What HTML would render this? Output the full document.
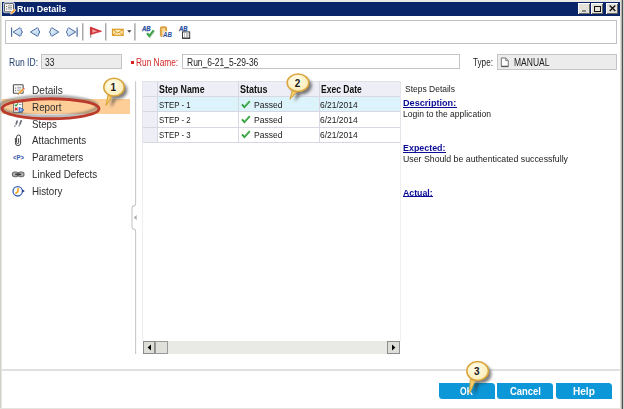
<!DOCTYPE html>
<html><head><meta charset="utf-8"><title>Run Details</title>
<style>
html,body{margin:0;padding:0;}
body{width:624px;height:409px;position:relative;overflow:hidden;background:#fff;font-family:"Liberation Sans",sans-serif;font-size:10px;color:#222;}
.a{position:absolute;}
.t{position:absolute;white-space:nowrap;line-height:14px;height:14px;transform-origin:0 50%;filter:blur(.35px);}
</style></head><body>
<div class="a" style="left:0px;top:0px;width:1px;height:409px;background:#d3d2c9;"></div>
<div class="a" style="left:1px;top:0px;width:1px;height:409px;background:#e6e5df;"></div>
<div class="a" style="left:0px;top:0px;width:622px;height:2px;background:#ebe9e3;"></div>
<div class="a" style="left:619.6px;top:0px;width:1.4px;height:409px;background:#dddcd5;"></div>
<div class="a" style="left:621px;top:0px;width:1px;height:409px;background:#b5b5ae;"></div>
<div class="a" style="left:622px;top:0px;width:1px;height:409px;background:#515151;"></div>
<div class="a" style="left:623px;top:0px;width:1px;height:409px;background:#d0d2d2;"></div>
<div class="a" style="left:0px;top:408px;width:621px;height:1px;background:#e6e4de;"></div>
<div class="a" style="left:1.6px;top:1.7px;width:618px;height:14px;background:#0a246a;"></div>
<div class="t" style="left:17.40px;top:1.81px;font-size:9.5px;color:#fff;font-weight:bold;transform:scaleX(0.9416);">Run Details</div>
<svg class="a" style="left:2px;top:1px" width="16" height="16" viewBox="2 1 16 16"><rect x="3.600" y="2.700" width="10.800" height="10" rx="1.200" fill="#f4f4f4" stroke="#c4d4ee" stroke-width="1"/><rect x="4.500" y="3.600" width="9" height="8.200" rx=".6" fill="#f6f6f6" stroke="#5c5c5c" stroke-width="1"/><path d="M6 6.500h1.200M6 9h1.200" stroke="#666" stroke-width="1"/><path d="M8 5.800h4M8 7.400h4M8 9h4" stroke="#8e8e8e" stroke-width=".9"/><path d="M10.400 14.200l.5-2 3.600-3.500 1.500 1.500-3.600 3.500z" fill="#f2a63a" stroke="#fff" stroke-width=".5"/></svg>
<div class="a" style="left:578.2px;top:3.3px;width:11.7px;height:10.5px;background:#e4e2d8;box-shadow:inset 1px 1px #fff,inset -1px -1px #6a6a64"></div>
<div class="a" style="left:590.8px;top:3.3px;width:12.5px;height:10.5px;background:#e4e2d8;box-shadow:inset 1px 1px #fff,inset -1px -1px #6a6a64"></div>
<div class="a" style="left:605.5px;top:3.3px;width:12.5px;height:10.5px;background:#e4e2d8;box-shadow:inset 1px 1px #fff,inset -1px -1px #6a6a64"></div>
<div class="a" style="left:581.7px;top:10.4px;width:4.7px;height:1.4px;background:#8a8a86;"></div>
<div class="a" style="left:593.500px;top:5.500px;width:5.300px;height:4px;border:1px solid #111;border-top-width:1.800px"></div>
<svg class="a" style="left:605.500px;top:3.300px" width="13" height="11"><path d="M3.700 2.600l5.600 5.300M9.300 2.600l-5.600 5.300" stroke="#111" stroke-width="1.400"/></svg>
<div class="a" style="left:5px;top:20px;width:609.500px;height:22.300px;border:1px solid #c2c2c2;background:#fff"></div>
<svg class="a" style="left:0;top:18px" width="220" height="28" viewBox="0 18 220 28">
<defs><linearGradient id="ab" x1="0" y1="0" x2="1" y2="1"><stop offset="0" stop-color="#f4f9ff"/><stop offset="1" stop-color="#a9cbe6"/></linearGradient></defs>
<g fill="url(#ab)" stroke="#4a6aa4" stroke-width="1" stroke-linejoin="round">
 <path d="M11.600 27.400v9.400" fill="none" stroke-width="1.200"/>
 <path d="M13.100 32l7-4.300 1 1v1q2.600 2.300 0 4.600v1l-1 1z"/>
 <path d="M30.500 32l7-4.300 1 1v1q2.600 2.300 0 4.600v1l-1 1z"/>
 <path d="M58.800 32l-7-4.300-1 1v1q-2.600 2.300 0 4.600v1l1 1z"/>
 <path d="M75.700 32l-7-4.300-1 1v1q-2.600 2.300 0 4.600v1l1 1z"/>
 <path d="M77.100 27.400v9.400" fill="none" stroke-width="1.200"/>
</g>
<path d="M82.750 23.200v17.300M105.750 23.200v17.300M134.900 23.200v17.300" stroke="#a4a4a4" stroke-width="1.400" fill="none"/>
<path d="M90.700 27v10.800" stroke="#8c8c8c" stroke-width="1.100"/><path d="M90.400 27.100l11.100 4.200-11.100 3.300z" fill="#d5353b" stroke="#c8262c" stroke-width=".7" stroke-linejoin="round"/><path d="M92.300 29.200l5.200 2-5.200 1.600z" fill="#f0a0a0"/>
<rect x="112.500" y="29.300" width="10.600" height="6" fill="#fdefc0" stroke="#dc981e" stroke-width="1.200"/><path d="M112.500 29.300l5.300 3.700 5.300-3.700M112.500 35.300l3.800-3M123.100 35.300l-3.800-3" stroke="#dc981e" stroke-width="1" fill="none"/>
<path d="M127.200 30.300h4.200l-2.100 2.500z" fill="#3a3a3a"/>
<g font-family="Liberation Sans, sans-serif" font-weight="bold" font-style="italic" font-size="6.400" fill="#2c50a0" stroke="#2c50a0" stroke-width=".25">
<text x="142" y="31" textLength="8.600" lengthAdjust="spacingAndGlyphs">AB</text>
<text x="179" y="31" textLength="8.400" lengthAdjust="spacingAndGlyphs">AB</text>
</g>
<path d="M147 33.200l2.300 2.700 4.300-5.700" stroke="#b8c8b8" stroke-width="2.600" fill="none" transform="translate(.4,.5)"/>
<path d="M147 33.200l2.300 2.700 4.300-5.700" stroke="#3aa444" stroke-width="1.900" fill="none"/>
<rect x="160.400" y="26.800" width="6.200" height="9.800" rx="1.200" fill="#e6b04c" stroke="#c88e2c" stroke-width=".8"/><rect x="162" y="28.400" width="3" height="6" fill="#f4d89c"/>
<text x="163" y="37.300" font-family="Liberation Sans, sans-serif" font-weight="bold" font-style="italic" font-size="6.600" fill="#2c50a0" stroke="#fff" stroke-width="1.400" paint-order="stroke" textLength="9" lengthAdjust="spacingAndGlyphs">AB</text>
<rect x="182.500" y="31.900" width="7.200" height="6.200" fill="#fff" stroke="#3c3c3c" stroke-width="1"/><path d="M182 38.300h8.200" stroke="#333" stroke-width="1"/><path d="M184 34h1M186 34h2.600M184 36h1M186 36h2.600" stroke="#777" stroke-width=".9"/>
</svg>
<div class="t" style="left:9.20px;top:56.03px;font-size:10px;color:#1f3f77;transform:scaleX(0.8555);">Run ID:</div>
<div class="a" style="left:41px;top:53.800px;width:79.300px;height:13.500px;border:1px solid #c4c4c4;background:#ececec"></div>
<div class="t" style="left:45.30px;top:55.83px;font-size:10px;color:#222;transform:scaleX(0.8468);">33</div>
<div class="a" style="left:130.5px;top:60.5px;width:3px;height:3px;background:#d62020;"></div>
<div class="t" style="left:135.80px;top:56.03px;font-size:10px;color:#d32626;transform:scaleX(0.8340);">Run Name:</div>
<div class="a" style="left:182.400px;top:53.800px;width:275.400px;height:13.500px;border:1px solid #c4c4c4;background:#fff"></div>
<div class="t" style="left:186.70px;top:55.83px;font-size:10px;color:#222;transform:scaleX(0.8498);">Run_6-21_5-29-36</div>
<div class="t" style="left:473.00px;top:55.53px;font-size:10px;color:#222;transform:scaleX(0.8163);">Type:</div>
<div class="a" style="left:496.500px;top:54px;width:118px;height:14.300px;border:1px solid #c4c4c4;background:#ececec"></div>
<svg class="a" style="left:500px;top:57px" width="11" height="11"><path d="M1.300 9.300v-8.300h4.400l2.600 2.600v5.700z" fill="#fcfcfc" stroke="#777" stroke-width="1"/><path d="M5.700 1v2.600h2.600" fill="none" stroke="#777" stroke-width=".9"/><path d="M1.300 9.500h7" stroke="#555" stroke-width="1.200"/></svg>
<div class="t" style="left:513.70px;top:55.53px;font-size:10px;color:#222;transform:scaleX(0.8513);">MANUAL</div>
<div class="a" style="left:2px;top:98.8px;width:127.8px;height:15px;background:#fece98;"></div>
<div class="t" style="left:31.90px;top:83.39px;font-size:11px;color:#2e2e2e;transform:scaleX(0.9180);">Details</div>
<div class="t" style="left:31.90px;top:100.19px;font-size:11px;color:#2e2e2e;transform:scaleX(0.8970);">Report</div>
<div class="t" style="left:31.90px;top:116.79px;font-size:11px;color:#2e2e2e;transform:scaleX(0.8842);">Steps</div>
<div class="t" style="left:31.90px;top:133.39px;font-size:11px;color:#2e2e2e;transform:scaleX(0.8862);">Attachments</div>
<div class="t" style="left:31.90px;top:150.09px;font-size:11px;color:#2e2e2e;transform:scaleX(0.9003);">Parameters</div>
<div class="t" style="left:31.90px;top:166.99px;font-size:11px;color:#2e2e2e;transform:scaleX(0.8953);">Linked Defects</div>
<div class="t" style="left:31.90px;top:183.79px;font-size:11px;color:#2e2e2e;transform:scaleX(0.8886);">History</div>
<svg class="a" style="left:8px;top:80px" width="24" height="122" viewBox="8 80 24 122">
<g>
<rect x="13.400" y="84.700" width="9.700" height="8.600" rx=".6" fill="#fdfdfd" stroke="#4e4e4e" stroke-width="1.100"/><path d="M15 88.100h1.200M15 90.600h1.200" stroke="#666" stroke-width="1"/><path d="M17.200 87.400h4.200M17.200 89h4.200M17.200 90.600h3" stroke="#999" stroke-width=".8"/><path d="M17.700 94.600l.5-2 4.400-4.300 1.600 1.500-4.500 4.300z" fill="#eea030" stroke="#fff" stroke-width=".4"/><path d="M17.700 94.600l.4-1.400 1 1z" fill="#333"/><path d="M22.600 88.300l1.600 1.500.8-.8-1.600-1.500z" fill="#e25a5a"/>
</g>
<g>
<rect x="13.500" y="101.800" width="9" height="10.600" fill="#fbfbfb" stroke="#7a7a7a" stroke-width="1"/>
<path d="M14.800 104.600l1.200 1.200 2-2.400" stroke="#2a9a3a" stroke-width="1.200" fill="none"/><path d="M19 104.500h2.500" stroke="#999" stroke-width=".9"/>
<path d="M14.800 107.600l2.800 2.800M17.600 107.600l-2.800 2.800" stroke="#d22" stroke-width="1.200"/>
<path d="M19.200 107.400l4.600 2.600-4.600 2.600z" fill="#a8ccf2" stroke="#2b62b8" stroke-width="1" stroke-linejoin="round"/>
</g>
<g stroke="#666c74" stroke-width="1.700" stroke-linecap="round"><path d="M16.200 124l1-3M20 124l1.200-3.200"/><path d="M14.700 126.300l.3-.5M19 125.900l.3-.5" stroke="#8a96a4" stroke-width="1.400"/></g>
<path d="M15.400 138v5a2.600 2.600 0 0 0 5.200 0v-6a2 2 0 0 0-4 0v5.600a1 1 0 0 0 2 0v-4.400" stroke="#444" stroke-width="1" fill="none"/>
<text x="13" y="160.200" font-size="7.200" font-weight="bold" fill="#3558a8" font-family="Liberation Sans, sans-serif" textLength="11" lengthAdjust="spacingAndGlyphs">&lt;P&gt;</text>
<g><rect x="12.400" y="172" width="5.800" height="4.800" rx="2.200" fill="#b4b4b4" stroke="#6a6a6a" stroke-width="1.100"/><rect x="18.200" y="172" width="5.800" height="4.800" rx="2.200" fill="#b4b4b4" stroke="#6a6a6a" stroke-width="1.100"/><path d="M15.200 174.400h6" stroke="#3c3c3c" stroke-width="1.600"/></g>
<g><circle cx="17.700" cy="191.300" r="4.700" fill="#fbfcff" stroke="#3a60b8" stroke-width="1.300"/><path d="M18.200 188.200l-.4 3.400-2.400 2" stroke="#efa81e" stroke-width="1.700" fill="none" stroke-linejoin="round"/><path d="M22.300 189.400l2.600 1.500-2.600 1.500z" fill="#1c3484"/></g>
</svg>
<svg class="a" style="left:128px;top:78px" width="12" height="280" viewBox="128 78 12 280"><path d="M135.600 81.300V203.500q0 2.400-1.800 2.400t-1.800 2.400v18.400q0 2.400 1.800 2.400t1.800 2.400V354" fill="none" stroke="#c8c8c8" stroke-width="1.100"/><path d="M136.600 215l-2.800 2.500 2.800 2.500z" fill="#a8a8a8"/></svg>
<div class="a" style="left:142px;top:81.3px;width:258.3px;height:15px;background:#eeeef7;"></div>
<div class="a" style="left:142px;top:96.3px;width:15.5px;height:46px;background:#eeeef7;"></div>
<div class="a" style="left:157.5px;top:97px;width:242.8px;height:14.2px;background:#dcf3fb;"></div>
<div class="a" style="left:142px;top:81px;width:258.3px;height:1px;background:#e2e2ea;"></div>
<div class="a" style="left:142px;top:96.1px;width:258.3px;height:1px;background:#d8d8e2;"></div>
<div class="a" style="left:142px;top:111.1px;width:258.3px;height:1px;background:#d8d8e2;"></div>
<div class="a" style="left:142px;top:126.6px;width:258.3px;height:1px;background:#d8d8e2;"></div>
<div class="a" style="left:142px;top:141.9px;width:258.3px;height:1px;background:#d8d8e2;"></div>
<div class="a" style="left:142px;top:81.3px;width:1px;height:61.5px;background:#e4e4ea;"></div>
<div class="a" style="left:157.2px;top:81.3px;width:1px;height:61.5px;background:#d8d8e2;"></div>
<div class="a" style="left:238.4px;top:81.3px;width:1px;height:61.5px;background:#d8d8e2;"></div>
<div class="a" style="left:319.3px;top:81.3px;width:1px;height:61.5px;background:#d8d8e2;"></div>
<div class="a" style="left:400px;top:81.3px;width:1px;height:61.5px;background:#e4e4ea;"></div>
<div class="a" style="left:142.2px;top:142px;width:1px;height:199px;background:#efeff2;"></div>
<div class="a" style="left:400px;top:142px;width:1px;height:199px;background:#efeff2;"></div>
<div class="t" style="left:159.40px;top:83.23px;font-size:10px;color:#111;font-weight:bold;transform:scaleX(0.8820);">Step Name</div>
<div class="t" style="left:240.30px;top:83.23px;font-size:10px;color:#111;font-weight:bold;transform:scaleX(0.9020);">Status</div>
<div class="t" style="left:321.00px;top:83.23px;font-size:10px;color:#111;font-weight:bold;transform:scaleX(0.8515);">Exec Date</div>
<div class="t" style="left:158.50px;top:97.58px;font-size:9px;color:#1a1a1a;transform:scaleX(0.8691);">STEP - 1</div>
<div class="t" style="left:254.30px;top:97.58px;font-size:9px;color:#1a1a1a;transform:scaleX(0.9481);">Passed</div>
<div class="t" style="left:320.20px;top:97.58px;font-size:9px;color:#1a1a1a;transform:scaleX(0.9388);">6/21/2014</div>
<svg class="a" style="left:239px;top:98.0px" width="14" height="12"><path d="M3 6.400l2.400 2.700 5.400-6" stroke="#2f9e3c" stroke-width="1.900" fill="none"/><path d="M5.400 8.400l5-5.500" stroke="#7fd07f" stroke-width=".7" fill="none"/></svg>
<div class="t" style="left:158.50px;top:112.78px;font-size:9px;color:#1a1a1a;transform:scaleX(0.8691);">STEP - 2</div>
<div class="t" style="left:254.30px;top:112.78px;font-size:9px;color:#1a1a1a;transform:scaleX(0.9481);">Passed</div>
<div class="t" style="left:320.20px;top:112.78px;font-size:9px;color:#1a1a1a;transform:scaleX(0.9388);">6/21/2014</div>
<svg class="a" style="left:239px;top:113.2px" width="14" height="12"><path d="M3 6.400l2.400 2.700 5.400-6" stroke="#2f9e3c" stroke-width="1.900" fill="none"/><path d="M5.400 8.400l5-5.500" stroke="#7fd07f" stroke-width=".7" fill="none"/></svg>
<div class="t" style="left:158.50px;top:127.98px;font-size:9px;color:#1a1a1a;transform:scaleX(0.8691);">STEP - 3</div>
<div class="t" style="left:254.30px;top:127.98px;font-size:9px;color:#1a1a1a;transform:scaleX(0.9481);">Passed</div>
<div class="t" style="left:320.20px;top:127.98px;font-size:9px;color:#1a1a1a;transform:scaleX(0.9388);">6/21/2014</div>
<svg class="a" style="left:239px;top:128.4px" width="14" height="12"><path d="M3 6.400l2.400 2.700 5.400-6" stroke="#2f9e3c" stroke-width="1.900" fill="none"/><path d="M5.400 8.400l5-5.500" stroke="#7fd07f" stroke-width=".7" fill="none"/></svg>
<div class="a" style="left:142.5px;top:340.8px;width:257.3px;height:13px;background:#e9e9e5;"></div>
<div class="a" style="left:142.5px;top:340.8px;width:12.5px;height:13px;background:#deded8;box-shadow:inset 0 0 0 1px #8c8c8c"></div>
<div class="a" style="left:387.2px;top:340.8px;width:12.5px;height:13px;background:#deded8;box-shadow:inset 0 0 0 1px #8c8c8c"></div>
<div class="a" style="left:155px;top:340.8px;width:13px;height:13px;background:#e0e0da;box-shadow:inset 0 0 0 1px #9a9a9a"></div>
<svg class="a" style="left:142.500px;top:340.800px" width="13" height="13"><path d="M8 3.400L4.600 6.500 8 9.600z" fill="#000"/></svg>
<svg class="a" style="left:387.200px;top:340.800px" width="13" height="13"><path d="M5 3.400l3.400 3.100L5 9.600z" fill="#000"/></svg>
<div class="t" style="left:405.00px;top:82.48px;font-size:9.3px;color:#1a1a1a;transform:scaleX(0.9128);">Steps Details</div>
<div class="t" style="left:403.30px;top:95.51px;font-size:9.5px;color:#0c0c96;font-weight:bold;transform:scaleX(0.9605);">Description:</div>
<div class="a" style="left:403.0px;top:106.5px;width:53.800000000000004px;height:1px;background:#0c0c96;"></div>
<div class="t" style="left:403.40px;top:106.78px;font-size:9.3px;color:#1a1a1a;transform:scaleX(0.9194);">Login to the application</div>
<div class="t" style="left:403.30px;top:140.51px;font-size:9.5px;color:#0c0c96;font-weight:bold;transform:scaleX(0.9359);">Expected:</div>
<div class="a" style="left:403.0px;top:151.5px;width:43.1px;height:1px;background:#0c0c96;"></div>
<div class="t" style="left:403.40px;top:151.78px;font-size:9.3px;color:#1a1a1a;transform:scaleX(0.9417);">User Should be authenticated successfully</div>
<div class="t" style="left:403.30px;top:186.21px;font-size:9.5px;color:#0c0c96;font-weight:bold;transform:scaleX(0.9222);">Actual:</div>
<div class="a" style="left:403.0px;top:196.2px;width:30.3px;height:1px;background:#0c0c96;"></div>
<div class="a" style="left:2px;top:369.3px;width:617.5px;height:1.5px;background:#e0e0e0;"></div>
<div class="a" style="left:438.7px;top:383.3px;width:56px;height:15.5px;background:#0c97d9;border-radius:0 3.500px 0 3.500px"></div>
<div class="a" style="left:497px;top:383.3px;width:56px;height:15.5px;background:#0c97d9;border-radius:0 3.500px 0 3.500px"></div>
<div class="a" style="left:555.5px;top:383.3px;width:56px;height:15.5px;background:#0c97d9;border-radius:0 3.500px 0 3.500px"></div>
<div class="t" style="left:460.20px;top:383.66px;font-size:10.5px;color:#fff;font-weight:bold;transform:scaleX(0.8127);">OK</div>
<div class="t" style="left:510.20px;top:383.76px;font-size:10.5px;color:#fff;font-weight:bold;transform:scaleX(0.8972);">Cancel</div>
<div class="t" style="left:573.40px;top:383.76px;font-size:10.5px;color:#fff;font-weight:bold;transform:scaleX(0.9568);">Help</div>
<svg class="a" style="left:0;top:0" width="624" height="409" viewBox="0 0 624 409">
<defs>
<filter id="s1" x="-20%" y="-50%" width="140%" height="200%"><feGaussianBlur stdDeviation="1.300"/></filter>
<filter id="s2" x="-50%" y="-50%" width="200%" height="200%"><feGaussianBlur stdDeviation="1.700"/></filter>
<radialGradient id="cg" cx="0.400" cy="0.350" r="0.750"><stop offset="0" stop-color="#fffdea"/><stop offset="1" stop-color="#fbe9ae"/></radialGradient>
</defs>
<ellipse cx="48.500" cy="106.300" rx="48.500" ry="10" fill="none" stroke="#555" stroke-opacity=".55" stroke-width="3" filter="url(#s1)"/>
<ellipse cx="50.500" cy="108.750" rx="48.500" ry="10" fill="none" stroke="#bb3a2b" stroke-width="2.800"/>
<g>
 <g filter="url(#s2)" fill="#2a2a2a" fill-opacity="0.62"><ellipse cx="117.2" cy="90.2" rx="10.2" ry="8.9"/><path d="M112.2 98.3L110.7 107.6 116.0 99.8z"/></g>
 <path d="M108 95.3L106 105.6 111.8 96.8z" fill="#f3cf70" stroke="#d9a235" stroke-width="1"/>
 <ellipse cx="114" cy="87.2" rx="10.2" ry="8.9" fill="url(#cg)" stroke="#d9a53c" stroke-width="1.500"/>
</g>
<g>
 <g filter="url(#s2)" fill="#2a2a2a" fill-opacity="0.62"><ellipse cx="301.2" cy="85.8" rx="10.8" ry="8.7"/><path d="M296.5 93.3L294.7 101.3 300.9 94.8z"/></g>
 <path d="M292.3 90.3L290 99.3 296.7 91.8z" fill="#f3cf70" stroke="#d9a235" stroke-width="1"/>
 <ellipse cx="298" cy="82.8" rx="10.8" ry="8.7" fill="url(#cg)" stroke="#d9a53c" stroke-width="1.500"/>
</g>
<g>
 <g filter="url(#s2)" fill="#2a2a2a" fill-opacity="0.62"><ellipse cx="480.8" cy="374.0" rx="10.8" ry="9.4"/><path d="M474.4 382.6L474.4 395.3 479.4 383.8z"/></g>
 <path d="M470.2 379.6L469.7 393.3 475.2 380.8z" fill="#f3cf70" stroke="#d9a235" stroke-width="1"/>
 <ellipse cx="477.6" cy="371" rx="10.8" ry="9.4" fill="url(#cg)" stroke="#d9a53c" stroke-width="1.500"/>
</g>
<g font-family="Liberation Sans, sans-serif" font-weight="bold" font-size="10" fill="#1a1a1a" text-anchor="middle">
<text x="113.300" y="91">1</text><text x="297.500" y="86.500">2</text><text x="476.700" y="374.800">3</text>
</g>
</svg>
</body></html>
